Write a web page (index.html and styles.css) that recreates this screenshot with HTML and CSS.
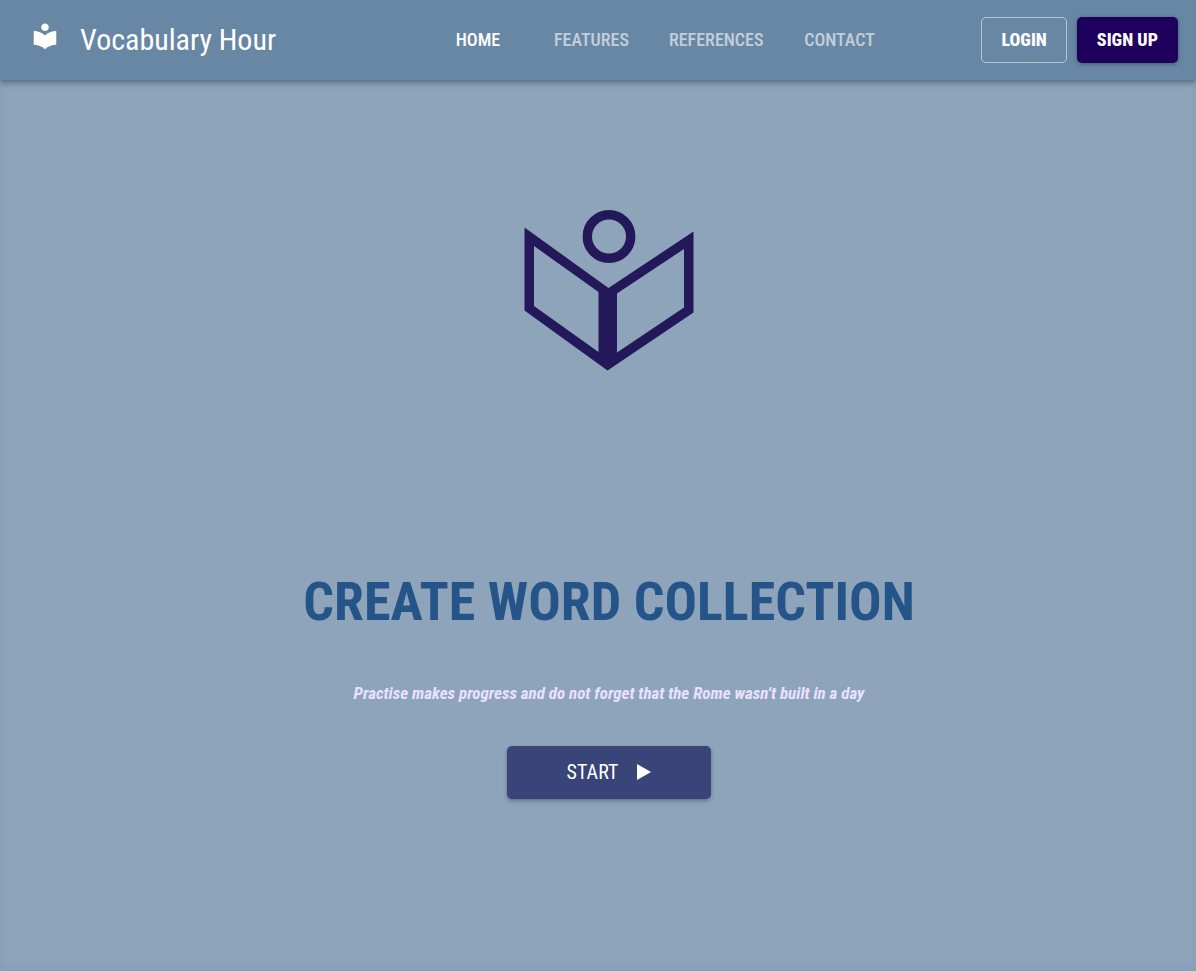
FILE: index.html
```html
<!DOCTYPE html>
<html lang="en">
<head>
  <meta charset="utf-8">
  <meta name="viewport" content="width=device-width, initial-scale=1">
  <title>Vocabulary Hour</title>
  <link rel="stylesheet" href="styles.css">
</head>
<body>
  <header class="topbar">
    <a class="brand" href="#">
      <svg class="brand-icon" viewBox="0 0 24 24" aria-hidden="true"><path d="M12 11.55C9.64 9.35 6.48 8 3 8v11c3.48 0 6.64 1.35 9 3.55 2.36-2.19 5.52-3.55 9-3.55V8c-3.48 0-6.64 1.35-9 3.55zM12 8c1.66 0 3-1.34 3-3s-1.34-3-3-3-3 1.34-3 3 1.34 3 3 3z"/></svg>
      <span class="brand-name">Vocabulary Hour</span>
    </a>
    <nav class="tabs">
      <a class="tab tab-active" href="#home">HOME</a>
      <a class="tab" href="#features">FEATURES</a>
      <a class="tab" href="#references">REFERENCES</a>
      <a class="tab" href="#contact">CONTACT</a>
    </nav>
    <div class="actions">
      <button class="btn btn-outlined" type="button">LOGIN</button>
      <button class="btn btn-filled" type="button">SIGN UP</button>
    </div>
  </header>
  <main class="hero">
    <svg class="hero-logo" viewBox="0 0 170 162" aria-hidden="true">
      <circle cx="85" cy="26.500" r="21.700" fill="none" stroke="#231859" stroke-width="9.400"/>
      <path fill="#231859" fill-rule="evenodd" d="M0.500 17.500L84.500 78L169.500 21.500V102.500L83.500 160.500L0.500 100.500ZM10 36V96L74.500 142V82ZM93 83.500L160 39V97.500L93 142.500Z"/>
    </svg>
    <h1 class="hero-title">CREATE WORD COLLECTION</h1>
    <p class="hero-text">Practise makes progress and do not forget that the Rome wasn’t built in a day</p>
    <button class="start" type="button">
      <span>START</span>
      <svg class="start-icon" viewBox="0 0 14 16" aria-hidden="true"><path d="M0 0L14 8L0 16Z"/></svg>
    </button>
  </main>
</body>
</html>
```
FILE: styles.css
```css
* {
  box-sizing: border-box;
}

body {
  margin: 0;
  min-height: 100vh;
  display: flex;
  flex-direction: column;
  background: #8ea4bb;
  box-shadow: inset 0 -2px 10px #849bb3;
  font-family: "Roboto Condensed", Roboto, sans-serif;
  color: #fff;
}

a {
  color: inherit;
  text-decoration: none;
}

button {
  font-family: inherit;
  color: #fff;
  cursor: pointer;
}

.topbar {
  display: flex;
  justify-content: space-between;
  align-items: center;
  height: 80px;
  padding: 0 18px 0 30px;
  background: #6887a4;
  box-shadow: 0 2px 4px -1px rgba(0, 0, 0, 0.2), 0 4px 5px rgba(0, 0, 0, 0.14), 0 1px 10px rgba(0, 0, 0, 0.12);
}

.brand {
  display: flex;
  align-items: center;
  gap: 20px;
  padding-right: 60px;
}

.brand-icon {
  width: 30px;
  height: 30px;
  margin-bottom: 8px;
  fill: #fff;
}

.brand-name {
  font-size: 30px;
  line-height: 40px;
  white-space: nowrap;
}

.tabs {
  display: flex;
}

.tab {
  min-width: 112px;
  padding: 0 20px;
  font-size: 18px;
  line-height: 48px;
  font-weight: 500;
  text-align: center;
  opacity: 0.6;
}

.tab-active {
  opacity: 1;
}

.actions {
  display: flex;
  gap: 10px;
}

.btn {
  height: 46px;
  padding: 0 19px 2px;
  border: 1px solid transparent;
  border-radius: 5px;
  font-size: 18px;
  font-weight: 800;
}

.btn-outlined {
  background: transparent;
  border-color: #b5c4d3;
}

.btn-filled {
  background: #1e005d;
  box-shadow: 0 1px 4px rgba(0, 0, 0, 0.35);
}

.hero {
  display: flex;
  flex-direction: column;
  align-items: center;
  padding: 130px 0 40px 22px;
}

.hero-logo {
  width: 170px;
  height: 162px;
}

.hero-title {
  margin: 192px 0 0;
  font-size: 54px;
  line-height: 76px;
  font-weight: 700;
  color: #255489;
}

.hero-text {
  margin: 40px 0;
  font-size: 17px;
  line-height: 26px;
  font-weight: 700;
  font-style: italic;
  color: #e9e1ff;
}

.start {
  display: flex;
  align-items: center;
  justify-content: center;
  gap: 19px;
  width: 204px;
  height: 53px;
  padding: 0 6px 2px;
  border: 0;
  border-radius: 5px;
  background: #394478;
  box-shadow: 0 2px 4px rgba(0, 0, 0, 0.3);
  font-size: 20px;
}

.start-icon {
  width: 14px;
  height: 16px;
  fill: #fff;
}
```
